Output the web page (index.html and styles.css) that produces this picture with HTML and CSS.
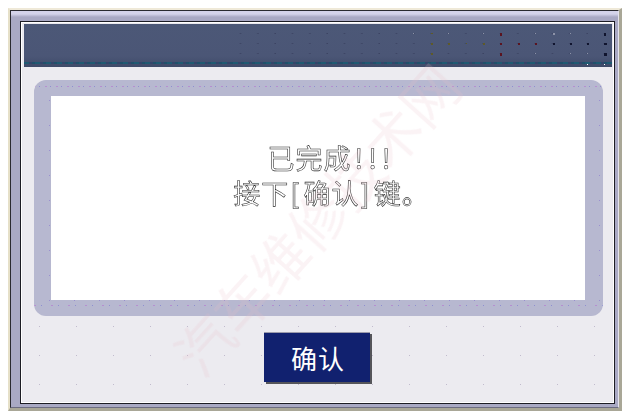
FILE: index.html
```html
<!DOCTYPE html>
<html lang="zh">
<head>
<meta charset="utf-8">
<title>确认</title>
<link rel="stylesheet" href="styles.css">
</head>
<body>
<div class="outer">
  <div class="frame">
    <div class="inner">
      <div class="header">
        <svg class="dots" width="388" height="43" viewBox="0 0 388 43">
          <defs>
            <pattern id="d" x="0" y="0" width="17.33" height="10" patternUnits="userSpaceOnUse">
              <rect x="16" y="9" width="1" height="1" fill="#333a58"/>
            </pattern>
          </defs>
          <rect width="388" height="36" fill="url(#d)"/>
          <g fill="#8d93a8">
            <rect x="189" y="9" width="1" height="1"/><rect x="224" y="9" width="1" height="1"/><rect x="259" y="9" width="1" height="1"/><rect x="311" y="9" width="1" height="1"/><rect x="329" y="9" width="2" height="2"/><rect x="346" y="9" width="1" height="1"/>
            <rect x="311" y="29" width="1" height="1"/><rect x="346" y="29" width="1" height="1"/><rect x="363" y="29" width="1" height="1"/>
          </g>
          <g fill="#5e5a28">
            <rect x="207" y="9" width="2" height="1"/><rect x="207" y="19" width="2" height="2"/><rect x="224" y="19" width="2" height="2"/><rect x="242" y="19" width="1" height="1"/><rect x="259" y="19" width="2" height="2"/><rect x="207" y="29" width="2" height="2"/>
          </g>
          <g fill="#5a1420">
            <rect x="276" y="9" width="2" height="3"/><rect x="276" y="19" width="2" height="2"/><rect x="294" y="19" width="2" height="2"/><rect x="311" y="19" width="2" height="2"/><rect x="276" y="29" width="2" height="3"/>
          </g>
          <g fill="#10142e">
            <rect x="329" y="19" width="2" height="2"/><rect x="346" y="19" width="2" height="2"/><rect x="363" y="19" width="2" height="2"/><rect x="380" y="19" width="3" height="2"/><rect x="380" y="9" width="2" height="3"/><rect x="380" y="29" width="3" height="3"/>
          </g>
          <g fill="#fff">
            <rect x="363" y="40" width="1" height="1"/><rect x="380" y="40" width="1" height="1"/>
          </g>
        </svg>
      </div>
      <div class="body">
        <div class="band">
          <div class="message">
            <p class="line">已完成<span class="bang">!!!</span></p>
            <p class="line">接下<span class="bracket">[</span>确认<span class="bracket">]</span>键。</p>
          </div>
        </div>
        <button class="confirm">确认</button>
      </div>
      <div class="watermark">汽车维修技术网</div>
    </div>
  </div>
</div>
</body>
</html>
```
FILE: styles.css
```css
html, body { margin: 0; padding: 0; background: #fff; }
body { width: 625px; height: 418px; overflow: hidden; }
.outer {
  box-sizing: border-box;
  margin: 8px 3px 7px 8px;
  height: 403px;
  border-top: 2px solid #efe9d8;
  border-left: 2px solid #e6e0c8;
  border-right: 3px solid #a9a797;
  border-bottom: 3px solid #a9a797;
}
.frame {
  box-sizing: border-box;
  height: 100%;
  border: 1px solid #2a2a30;
  border-right-color: #e4e2ec;
  border-bottom-color: #6c6c80;
  background: linear-gradient(#d4d3ea 0, #d4d3ea 3px, #a9a9c4 6px, #a9a9c4 100%);
  padding: 10px 3px 3px 9px;
}
.inner {
  position: relative;
  box-sizing: border-box;
  height: 100%;
  overflow: hidden;
  background-color: #ecebf0;
  background-image: radial-gradient(circle, rgba(150,140,170,.5) 0 .6px, transparent 1px);
  background-size: 37px 29px;
  border: 1px solid #1c1c24;
  box-shadow: inset 0 0 0 1px #fff, inset 0 0 0 2px #e9e8ee;
  padding: 2px 2px 2px 3px;
}
.header {
  height: 43px;
  display: flex;
  justify-content: flex-end;
  background:
    repeating-linear-gradient(90deg, #1f5a72 0 5px, #33456a 5px 8px, #20506a 8px 11px) 0 38px / 100% 2px no-repeat,
    linear-gradient(#4c5877, #4b5676 75%, #3e4a68 100%);
}
.dots { display: block; }
.body {
  display: flex;
  flex-direction: column;
  align-items: center;
  padding: 13px 9px 0 10px;
}
.band {
  box-sizing: border-box;
  width: 569px;
  height: 236px;
  padding: 16px 18px 16px 17px;
  background-color: #b7b8d0;
  background-image:
    repeating-linear-gradient(90deg, #b58fd0 0 2px, transparent 2px 5px, #8f8fd0 5px 6px, transparent 6px 11px),
    repeating-linear-gradient(90deg, #b58fd0 0 2px, transparent 2px 7px, #8f8fd0 7px 8px, transparent 8px 17px),
    radial-gradient(circle, #9a8fd0 0 .7px, transparent 1px);
  background-size: 100% 1px, 100% 1px, 25px 25px;
  background-position: 0 6px, 0 225px, 3px 8px;
  background-repeat: no-repeat, no-repeat, repeat;
  border-radius: 12px;
}
.message {
  box-sizing: border-box;
  height: 204px;
  padding: 44px 0 0 27px;
  background-color: #fff;
  text-align: center;
  font-family: "Noto Sans CJK SC", sans-serif;
}
.line {
  margin: 0;
  height: 35px;
  line-height: 35px;
  font-size: 27px;
  letter-spacing: 1px;
  color: #fff;
  -webkit-text-stroke: 0.55px #222;
  will-change: transform;
}
.bang { letter-spacing: 5px; margin-left: 3px; }
.bracket { letter-spacing: 3px; margin: 0 1px; }
.confirm {
  box-sizing: border-box;
  width: 106px;
  height: 50px;
  margin: 16px 3px 0 0;
  border: 0;
  border-top: 1px solid #9c9cac;
  box-shadow: 2px 2px 0 #55555a;
  background: #11216f;
  color: #fff;
  font-family: "Noto Sans CJK SC", sans-serif;
  font-size: 26px;
  letter-spacing: 1px;
  padding: 0 0 0 2px;
}
.watermark {
  position: absolute;
  left: 294px;
  top: 196px;
  font-family: "Noto Sans CJK SC", sans-serif;
  font-size: 56px;
  white-space: nowrap;
  color: rgba(232, 190, 200, .18);
  transform: translate(-50%, -50%) rotate(-48deg);
  pointer-events: none;
}
```
